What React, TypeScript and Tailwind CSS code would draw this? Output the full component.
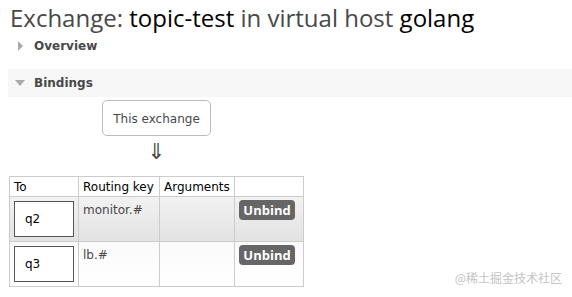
import React from "react";

const rows = [
  { queue: "q2", key: "monitor.#", shade: "bg-gradient-to-b from-[#f2f2f2] to-[#e2e2e2]" },
  { queue: "q3", key: "lb.#", shade: "bg-gradient-to-b from-[#fafafa] to-[#ffffff]" },
];

function Section({ title, open }: { title: string; open: boolean }) {
  return (
    <div className={`flex items-center ${open ? "bg-[#f7f7f7] h-[28px] pl-[7px] gap-[9px]" : "h-[20px] pl-[18px] gap-[11px]"}`}>
      {open ? (
        <span className="w-0 h-0 border-l-[5px] border-r-[5px] border-t-[6px] border-l-transparent border-r-transparent border-t-[#aaa]" />
      ) : (
        <span className="w-0 h-0 border-t-[5px] border-b-[5px] border-l-[5px] border-t-transparent border-b-transparent border-l-[#aaa]" />
      )}
      <span className="text-[12px] font-bold text-[#484848]">{title}</span>
    </div>
  );
}

export default function App() {
  return (
    <div className="w-[572px] h-[297px] bg-white overflow-hidden relative font-['DejaVu_Sans',sans-serif] text-[#484848]">
      {/* Title */}
      <h1 className="pl-[10px] pt-[3px] h-[36px] text-[24px] leading-[30px] font-['Open_Sans',sans-serif] text-[#484848]">
        Exchange: <span className="text-black">topic-test</span> in virtual host{" "}
        <span className="text-black">golang</span>
      </h1>

      <Section title="Overview" open={false} />
      <div className="h-[13px]" />
      <div className="pl-[8px]">
        <Section title="Bindings" open />
      </div>

      {/* Source */}
      <div className="pl-[102px] pt-[3px]">
        <div className="w-[109px] h-[36px] rounded-[5px] border border-[#bbb] flex items-center justify-center text-[12px] pt-[1px]">
          This exchange
        </div>
        <div className="w-[109px] text-center text-[22px] leading-[26px] mt-[3px] text-[#484848]">⇓</div>
      </div>

      {/* Table */}
      <table className="ml-[9px] mt-[11px] border-collapse text-[12px]">
        <thead>
          <tr className="h-[20px] text-black">
            <th className="w-[69px] border border-[#ccc] font-normal text-left px-[4px] py-0">To</th>
            <th className="w-[81px] border border-[#ccc] font-normal text-left px-[4px] py-0">Routing key</th>
            <th className="w-[75px] border border-[#ccc] font-normal text-left px-[4px] py-0">Arguments</th>
            <th className="w-[69px] border border-[#ccc]"></th>
          </tr>
        </thead>
        <tbody>
          {rows.map((r) => (
            <tr key={r.queue} className={`h-[45px] ${r.shade}`}>
              <td className="border border-[#ccc] px-[4px] py-0 align-middle">
                <div className="w-[60px] h-[36px] bg-white border border-[#555] flex items-center pl-[10px] text-black">
                  {r.queue}
                </div>
              </td>
              <td className="border border-[#ccc] px-[4px] pt-[4px] align-top">{r.key}</td>
              <td className="border border-[#ccc]"></td>
              <td className="border border-[#ccc] px-[4px] pt-[3px] align-top">
                <button className="w-[56px] h-[20px] rounded-[4px] bg-[#666] text-white text-[13px] font-bold leading-[20px] font-['Open_Sans',sans-serif]">
                  Unbind
                </button>
              </td>
            </tr>
          ))}
        </tbody>
      </table>

      <div className="absolute right-[10px] bottom-[10px] text-[12px] text-[#c4c4c4] font-['Noto_Sans_CJK_SC',sans-serif]">
        @稀土掘金技术社区
      </div>
    </div>
  );
}
